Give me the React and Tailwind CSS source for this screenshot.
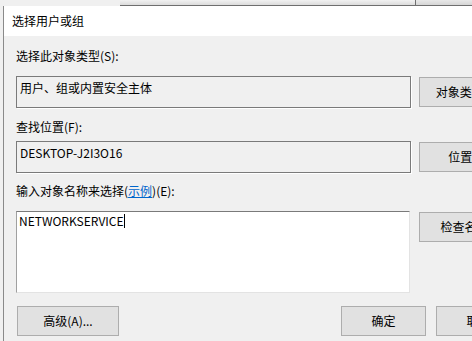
import React from 'react';

const font = { fontFamily: '"Noto Sans CJK SC", "Microsoft YaHei", sans-serif' };

const Field = ({ children, className = '' }) => (
    <div className={`w-[395px] h-[32px] shrink-0 border border-[#7a7a7a] shadow-[1px_1px_0_#ffffff] pl-[3px] pt-[3px] ${className}`}>
        {children}
    </div>
);

const Button = ({ children, className = '' }) => (
    <div className={`h-[30px] shrink-0 bg-[#e1e1e1] border border-[#adadad] flex items-center justify-center ${className}`}>
        {children}
    </div>
);

const App = () => {
    return (
        <div className="w-[472px] h-[341px] overflow-hidden bg-[#f0f0f0] flex flex-col text-[12px] leading-[16px] text-black" style={font}>
            {/* window behind */}
            <div className="h-[6px] shrink-0 flex">
                <div className="w-[120px] shrink-0" />
                <div className="w-[295px] shrink-0 bg-gradient-to-b from-[#f2f2f2] to-[#dcdcdc] border-b border-[#6f6f6f]" />
                <div className="flex-1 bg-gradient-to-b from-[#e8e8e8] to-[#d6d6d6] border-b border-l border-[#6f6f6f]" />
            </div>

            {/* dialog */}
            <div className="flex-1 ml-[3px] border-l border-[#8a8a8a] flex flex-col min-w-0">
                {/* title bar */}
                <div className="h-[30px] shrink-0 bg-white flex items-center pl-[8px]">
                    <span>选择用户或组</span>
                </div>

                {/* body */}
                <div className="flex-1 pl-[12px] flex flex-col w-[640px]">
                    <div className="mt-[12px]">选择此对象类型(S):</div>
                    <div className="mt-[12px] flex gap-[8px]">
                        <Field>用户、组或内置安全主体</Field>
                        <Button className="w-[107px] mt-[1px]">对象类型(T)...</Button>
                    </div>

                    <div className="mt-[11px]">查找位置(F):</div>
                    <div className="mt-[6px] flex gap-[8px]">
                        <Field>DESKTOP-J2I3O16</Field>
                        <Button className="w-[107px] mt-[1px]">位置(L)...</Button>
                    </div>

                    <div className="mt-[10px]">
                        输入对象名称来选择(<span className="text-[#0066cc] underline">示例</span>)(E):
                    </div>
                    <div className="mt-[12px] flex gap-[9px]">
                        <div className="w-[394px] h-[82px] shrink-0 bg-white border-t border-t-[#7a7a7a] border-l border-l-[#a0a0a0] border-r border-r-[#e3e3e3] border-b border-b-[#e3e3e3] pl-[2px] pt-[1px]">
                            <div className="flex items-center">
                                <span>NETWORKSERVICE</span>
                                <span className="w-[1px] h-[14px] bg-black" />
                            </div>
                        </div>
                        <Button className="w-[107px] mt-[1px]">检查名称(C)</Button>
                    </div>

                    <div className="mt-[13px] flex">
                        <Button className="w-[102px] ml-[1px]">高级(A)...</Button>
                        <Button className="w-[85px] ml-[222px]">确定</Button>
                        <Button className="w-[85px] ml-[10px]">取消</Button>
                    </div>
                </div>
            </div>
        </div>
    );
};

export default App;
